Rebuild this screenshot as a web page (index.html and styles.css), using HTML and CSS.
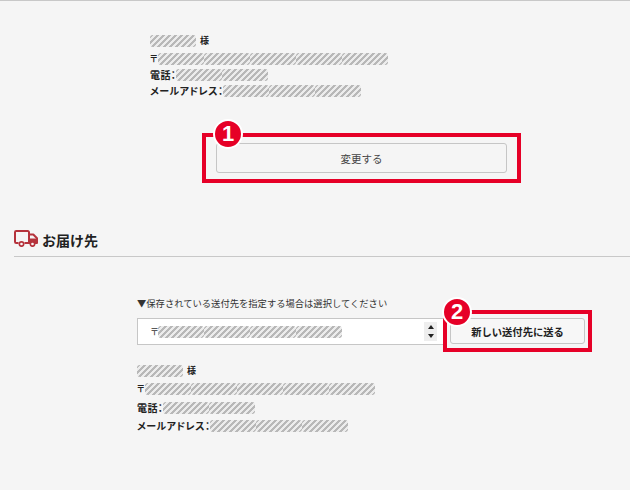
FILE: index.html
```html
<!DOCTYPE html>
<html lang="ja">
<head>
<meta charset="utf-8">
<title>お届け先</title>
<link rel="stylesheet" href="styles.css">
</head>
<body>
<section class="billing">
  <div class="info info-top">
    <div class="row row-name"><span class="mask"></span><span class="suffix">様</span></div>
    <div class="row row-post"><span class="zip">〒</span><span class="mask"></span><span class="mask"></span><span class="mask"></span><span class="mask"></span><span class="mask"></span></div>
    <div class="row row-tel">電話：<span class="mask"></span><span class="mask"></span></div>
    <div class="row row-mail">メールアドレス：<span class="mask"></span><span class="mask"></span><span class="mask"></span></div>
  </div>
  <div class="change-wrap">
    <div class="highlight highlight-one">
      <span class="badge badge-one">1</span>
      <button class="btn btn-change" type="button">変更する</button>
    </div>
  </div>
</section>
<section class="delivery">
  <h2 class="heading">
    <svg class="truck" width="24" height="17" viewBox="0 0 24 17" aria-hidden="true">
      <path d="M4.500 13H2.200A1.200 1.200 0 0 1 1 11.800V2.200A1.200 1.200 0 0 1 2.200 1H13.800A1.200 1.200 0 0 1 15 2.200V13H10.500" fill="none" stroke="#b5333c" stroke-width="2"/>
      <path d="M15 4.500H19.300L23 8.300V13H15Z" fill="#f5f5f5" stroke="#b5333c" stroke-width="2" stroke-linejoin="round"/>
      <path d="M15 8.500H23V13H15Z" fill="#b5333c"/>
      <circle cx="7.500" cy="14" r="2.200" fill="#f5f5f5" stroke="#b5333c" stroke-width="1.700"/>
      <circle cx="18.500" cy="14" r="2.200" fill="#f5f5f5" stroke="#b5333c" stroke-width="1.700"/>
    </svg>
    <span>お届け先</span>
  </h2>
  <div class="picker">
    <p class="picker-label">▼保存されている送付先を指定する場合は選択してください</p>
    <div class="picker-row">
      <div class="select">
        <span class="zip zip-select">〒</span><span class="mask"></span><span class="mask"></span><span class="mask"></span><span class="mask"></span>
        <span class="spinner"><i class="arrow arrow-up"></i><i class="arrow arrow-down"></i></span>
      </div>
      <div class="highlight highlight-two">
        <span class="badge badge-two">2</span>
        <button class="btn btn-new" type="button">新しい送付先に送る</button>
      </div>
    </div>
    <div class="info info-bottom">
      <div class="row row-name"><span class="mask"></span><span class="suffix">様</span></div>
      <div class="row row-post"><span class="zip">〒</span><span class="mask"></span><span class="mask"></span><span class="mask"></span><span class="mask"></span><span class="mask"></span></div>
      <div class="row row-tel">電話：<span class="mask"></span><span class="mask"></span></div>
      <div class="row row-mail">メールアドレス：<span class="mask"></span><span class="mask"></span><span class="mask"></span></div>
    </div>
  </div>
</section>
</body>
</html>
```
FILE: styles.css
```css
* { box-sizing: border-box; }
html, body { height: 100%; }
body {
  margin: 0;
  background: #f5f5f5;
  color: #222;
  font-family: "Noto Sans CJK JP", "Noto Sans", sans-serif;
  overflow: hidden;
}
.billing {
  border-top: 1px solid #c8c8c8;
  height: 216px;
  padding-top: 32px;
}
.info {
  display: flex;
  flex-direction: column;
  font-size: 10px;
  font-weight: 700;
  font-feature-settings: "palt";
  letter-spacing: 0.400px;
}
.info-top { margin-left: 150px; }
.info-bottom { margin-top: 10px; }
.row { display: flex; align-items: center; height: 16px; line-height: 16px; white-space: nowrap; }
.row-name { margin-bottom: 2px; }
.info-bottom .row { height: 18px; }
.info-bottom .row-name { margin-bottom: 0; }
.info-bottom .row-post { margin-bottom: 1px; }
.zip { font-size: 9px; width: 8px; }
.suffix { margin-left: 4px; font-size: 9px; }
.zip-select { font-weight: 400; }
.mask {
  display: block;
  width: 46px;
  height: 12px;
  border-radius: 3px;
  background: repeating-linear-gradient(135deg, #b8b8b8 0 2.500px, #ececec 2.500px 4.243px);
}
.change-wrap { display: flex; justify-content: flex-start; margin: 34px 0 0 202px; }
.highlight { position: relative; border: 4px solid #e60027; }
.highlight-one { width: 319px; height: 50px; padding: 6px 10px; }
.btn {
  display: block;
  width: 100%;
  height: 100%;
  padding: 0;
  background: #f5f5f5;
  border: 1px solid #c6c6c6;
  border-radius: 3px;
  color: #444;
  font-family: inherit;
  font-size: 10.500px;
}
.badge {
  position: absolute;
  width: 30px;
  height: 30px;
  border: 2px solid #fff;
  border-radius: 50%;
  background: #e60027;
  color: #fff;
  font-family: "Liberation Sans", sans-serif;
  font-size: 22px;
  font-weight: 700;
  line-height: 26px;
  text-align: center;
}
.badge-one { left: 7px; top: -18px; }
.badge-two { left: -5px; top: -17px; }
.heading {
  display: flex;
  align-items: center;
  gap: 4px;
  height: 41px;
  margin: 0 0 0 14px;
  padding: 10px 0 2px;
  border-bottom: 1px solid #c8c8c8;
  font-size: 14px;
  font-weight: 700;
  line-height: 18px;
}
.truck { display: block; flex: none; margin-top: -3px; }
.picker { margin: 39px 0 0 137px; }
.picker-label { margin: 0; font-size: 9.300px; line-height: 14px; color: #333; }
.picker-row { display: flex; align-items: flex-start; margin-top: 8px; }
.select {
  display: flex;
  align-items: center;
  width: 308px;
  height: 27px;
  padding-left: 12px;
  background: #fff;
  border: 1px solid #c6c6c6;
  position: relative;
  color: #333;
}
.spinner {
  position: absolute;
  right: 7px;
  top: 3px;
  width: 13px;
  height: 19px;
  background: #eee;
  display: flex;
  flex-direction: column;
  align-items: center;
  justify-content: space-between;
  padding: 3px 0;
}
.arrow { display: block; width: 0; height: 0; border-left: 3px solid transparent; border-right: 3px solid transparent; }
.arrow-up { border-bottom: 4px solid #222; }
.arrow-down { border-top: 4px solid #222; }
.highlight-two { width: 149px; height: 42px; margin: -8px 0 0 -2px; padding: 4px 3px; }
.btn-new { font-weight: 700; color: #222; font-size: 10.300px; background: #f7f7f7; }
```
